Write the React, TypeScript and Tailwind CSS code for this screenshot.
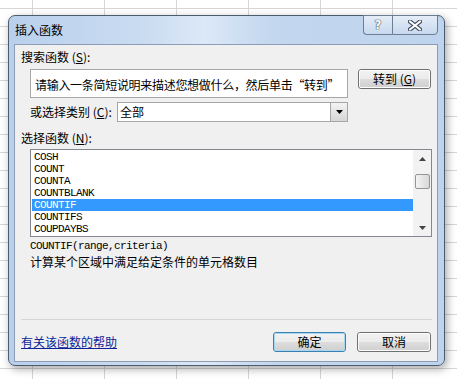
import React from "react";

const cjk = "font-['Noto_Sans_CJK_SC',sans-serif]";
const mono = "font-[family-name:'Liberation_Mono',monospace]";

function WinButton({ label, hot, focused, w }: { label: React.ReactNode; hot?: string; focused?: boolean; w: string }) {
  return (
    <div
      className={`${w} h-[20px] rounded-[3px] border ${focused ? "border-[#3c7fb1]" : "border-[#707070]"} bg-[linear-gradient(to_bottom,#f2f2f2_0%,#ebebeb_50%,#dddddd_51%,#cfcfcf_100%)] flex items-center justify-center`}
    >
      <div className={`w-full h-full rounded-[2px] border ${focused ? "border-[#a8d8f0]" : "border-[#fcfcfc]"} flex items-center justify-center`}>
        <span className={`${cjk} text-[12px] leading-[14px] text-black`}>
          {label}
          {hot && (
            <>
              {" ("}
              <span className="underline">{hot}</span>
              {")"}
            </>
          )}
        </span>
      </div>
    </div>
  );
}

const items = ["COSH", "COUNT", "COUNTA", "COUNTBLANK", "COUNTIF", "COUNTIFS", "COUPDAYBS"];

export default function App() {
  return (
    <div className="relative w-[457px] h-[379px] overflow-hidden bg-white">
      <div className="absolute inset-0 bg-[linear-gradient(to_right,#d6d6d6_1px,transparent_1px),linear-gradient(to_bottom,#d6d6d6_1px,transparent_1px)] bg-[size:72px_18px] bg-[position:32px_8px]" />

      <div className="absolute left-[8px] top-[15px] w-[437px] h-[351px] rounded-[7px] border border-[#4d5b6e] shadow-[2px_3px_8px_rgba(0,0,0,0.35)] bg-[linear-gradient(to_right,#b9d0ec_0%,#c9dbf1_30%,#dce8f7_45%,#c3d7ef_60%,#bed3ed_100%)] flex flex-col">
        <div className="relative h-[28px] flex items-center pl-[6px]">
          <span className={`${cjk} text-[12px] leading-[14px] text-black`}>插入函数</span>
          <div className="absolute right-[6px] top-[-1px] flex h-[20px]">
            <div className="w-[29px] h-full rounded-bl-[4px] border border-[#6d7d92] border-r-0 bg-[linear-gradient(to_bottom,#e4edf8,#c8d8ee)] flex items-center justify-center">
              <span className="font-['DejaVu_Sans',sans-serif] text-[12px] font-bold leading-none text-white [text-shadow:0_0_1px_#3a4a5e,0_0_1px_#3a4a5e,0_0_1px_#3a4a5e]">?</span>
            </div>
            <div className="w-[46px] h-full rounded-br-[4px] border border-[#6d7d92] bg-[linear-gradient(to_bottom,#e4edf8,#c8d8ee)] flex items-center justify-center">
              <svg width="14" height="11" viewBox="0 0 14 11">
                <path d="M2 1.5 L12 9.5 M12 1.5 L2 9.5" stroke="#3d4b5e" strokeWidth="4.2" strokeLinecap="round" />
                <path d="M2 1.5 L12 9.5 M12 1.5 L2 9.5" stroke="#ffffff" strokeWidth="2.2" strokeLinecap="round" />
              </svg>
            </div>
          </div>
        </div>

        <div className="ml-[5px] w-[424px] h-[318px] border border-[#8e9db3] bg-[#f0f0f0] flex flex-col">
          <div className={`mt-[5px] ml-[6px] h-[14px] ${cjk} text-[12px] leading-[14px] text-black`}>
            搜索函数 (<span className="underline">S</span>):
          </div>

          <div className="mt-[5px] ml-[15px] flex items-start gap-[10px]">
            <div className="w-[318px] h-[29px] border border-[#a6a6a6] bg-white pl-[4px] pt-[2px] overflow-hidden">
              <span className={`${cjk} text-[12px] leading-[14px] whitespace-nowrap tracking-[-0.3px] text-black`}>
                请输入一条简短说明来描述您想做什么，然后单击“转到”
              </span>
            </div>
            <WinButton label="转到" hot="G" w="w-[73px]" />
          </div>

          <div className="mt-[4px] ml-[15px] flex items-center h-[20px]">
            <div className={`w-[87px] ${cjk} text-[12px] leading-[14px] text-black`}>
              或选择类别 (<span className="underline">C</span>):
            </div>
            <div className="w-[231px] h-[20px] border border-[#a6a6a6] bg-white flex items-center">
              <span className={`flex-1 pl-[2px] ${cjk} text-[12px] leading-[14px] text-black`}>全部</span>
              <div className="w-[17px] h-[18px] border-l border-[#a6a6a6] bg-[linear-gradient(to_bottom,#f3f3f3,#d6d6d6)] flex items-center justify-center">
                <svg width="7" height="4" viewBox="0 0 7 4">
                  <path d="M0 0 H7 L3.5 4 Z" fill="#000" />
                </svg>
              </div>
            </div>
          </div>

          <div className={`mt-[9px] ml-[6px] h-[14px] ${cjk} text-[12px] leading-[14px] text-black`}>
            选择函数 (<span className="underline">N</span>):
          </div>

          <div className="mt-[4px] ml-[15px] w-[402px] h-[88px] border border-[#828790] bg-white flex">
            <div className="flex-1 pt-[1px] pl-[1px] flex flex-col">
              {items.map((it) => (
                <div
                  key={it}
                  className={`h-[12px] pl-[2px] ${mono} text-[11px] leading-[12px] tracking-[-0.6px] ${
                    it === "COUNTIF" ? "bg-[#3399ff] text-white" : "text-black"
                  }`}
                >
                  {it}
                </div>
              ))}
            </div>
            <div className="w-[18px] h-full bg-[#f2f2f2] flex flex-col items-center">
              <div className="h-[17px] flex items-center justify-center">
                <svg width="7" height="4" viewBox="0 0 7 4">
                  <path d="M0 4 H7 L3.5 0 Z" fill="#444" />
                </svg>
              </div>
              <div className="mt-[7px] w-[15px] h-[15px] rounded-[2px] border border-[#959595] bg-[linear-gradient(to_right,#f3f3f3,#d8d8d8)]" />
              <div className="flex-1" />
              <div className="h-[17px] flex items-center justify-center">
                <svg width="7" height="4" viewBox="0 0 7 4">
                  <path d="M0 0 H7 L3.5 4 Z" fill="#444" />
                </svg>
              </div>
            </div>
          </div>

          <div className={`mt-[3px] ml-[15px] h-[12px] ${mono} text-[11px] leading-[12px] tracking-[-0.6px] text-black`}>
            COUNTIF(range,criteria)
          </div>
          <div className={`mt-[3px] ml-[15px] h-[14px] ${cjk} text-[12px] leading-[14px] text-black`}>
            计算某个区域中满足给定条件的单元格数目
          </div>

          <div className="mt-[50px] ml-[6px] w-[411px] h-[1px] bg-[#d5d5d5]" />

          <div className="mt-[12px] ml-[6px] flex items-center h-[20px]">
            <span className={`flex-1 ${cjk} text-[12px] leading-[14px] text-[#0b1f99] underline`}>有关该函数的帮助</span>
            <WinButton label="确定" focused w="w-[73px]" />
            <div className="w-[11px]" />
            <WinButton label="取消" w="w-[74px]" />
            <div className="w-[6px]" />
          </div>
        </div>
      </div>
    </div>
  );
}
